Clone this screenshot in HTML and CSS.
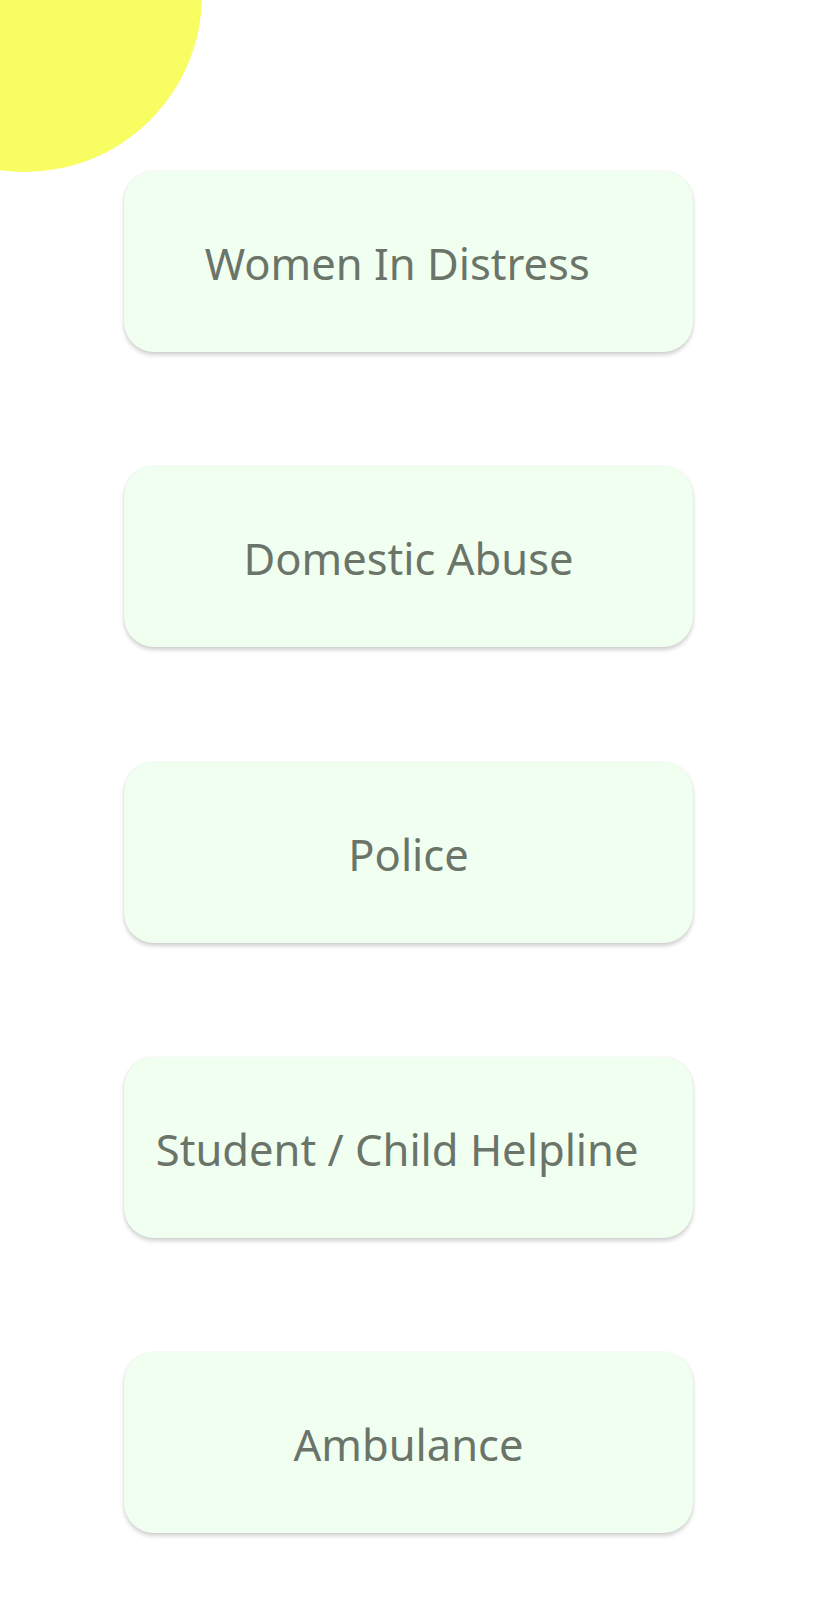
FILE: index.html
```html
<!DOCTYPE html>
<html lang="en">
<head>
<meta charset="utf-8">
<title>Helplines</title>
<link rel="stylesheet" href="styles.css">
</head>
<body>
<div class="blob"></div>
<main class="list">
  <button class="card"><span class="label">Women In Distress&nbsp;&nbsp;</span></button>
  <button class="card"><span class="label">Domestic Abuse</span></button>
  <button class="card"><span class="label">Police</span></button>
  <button class="card"><span class="label">Student / Child Helpline&nbsp;&nbsp;</span></button>
  <button class="card"><span class="label">Ambulance</span></button>
</main>
</body>
</html>
```
FILE: styles.css
```css
html, body {
  margin: 0;
  padding: 0;
  background: #ffffff;
}
body {
  width: 817px;
  min-height: 1600px;
  position: relative;
  overflow: hidden;
  font-family: "Noto Sans", "Open Sans", sans-serif;
}
.blob {
  position: absolute;
  left: -152px;
  top: -182px;
  width: 354px;
  height: 354px;
  border-radius: 50%;
  background: #f8fd62;
}
.list {
  display: flex;
  flex-direction: column;
  align-items: center;
  gap: 114.25px;
  padding-top: 171px;
}
.card {
  width: 569px;
  height: 181px;
  border: none;
  border-radius: 30px;
  background: #f0fff0;
  box-shadow: 0 3px 4px rgba(0, 0, 0, 0.18), 0 0 2px rgba(0, 0, 0, 0.07);
  display: flex;
  align-items: center;
  justify-content: center;
  padding: 0;
  font-family: inherit;
  cursor: pointer;
}
.label {
  font-size: 43.5px;
  color: #6b7469;
  white-space: pre;
  padding-top: 3px;
}
```
